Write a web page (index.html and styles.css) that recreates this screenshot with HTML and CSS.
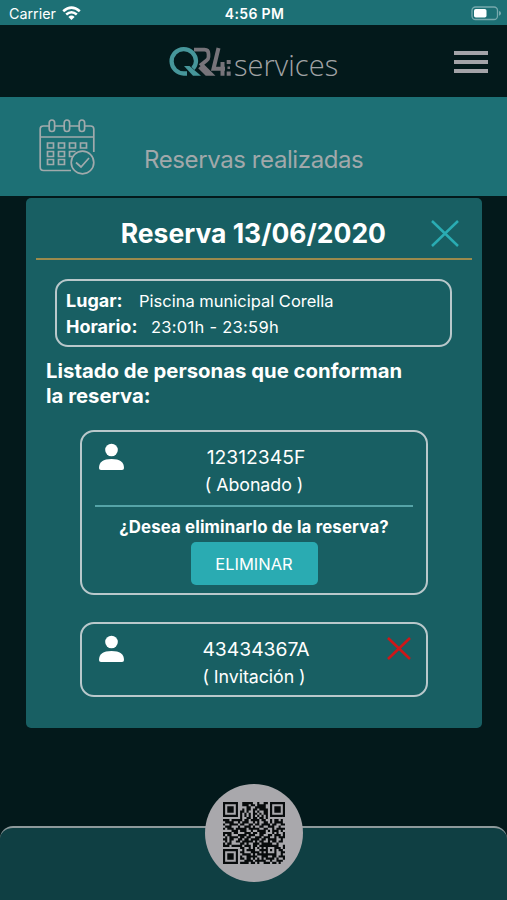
FILE: index.html
```html
<!DOCTYPE html>
<html lang="es">
<head>
<meta charset="utf-8">
<title>Reservas realizadas</title>
<link rel="stylesheet" href="styles.css">
</head>
<body>
<div class="app">
  <div class="status">
    <div class="carrier"><span>Carrier</span>
      <svg width="19" height="15" viewBox="0 0 19 15" fill="none" stroke="#fff" stroke-width="2.6"><path d="M1.2 5.2Q9.500-2 17.800 5.200M4.200 8.500Q9.500 4 14.800 8.500"/><path d="M6.400 10.900Q9.500 8.200 12.600 10.900L9.500 14Z" fill="#fff" stroke="none"/></svg>
    </div>
    <strong class="clock">4:56 PM</strong>
    <svg class="battery" width="31" height="15" viewBox="0 0 31 15"><rect x="1" y="1" width="25.500" height="12.500" rx="3.500" fill="none" stroke="#77a9ad" stroke-width="1.300"/><rect x="3" y="3" width="12.500" height="8.500" rx="1.800" fill="#fff"/><path d="M28 5Q30 5.500 30 7.300T28 9.800Z" fill="#77a9ad"/></svg>
  </div>
  <header class="header">
    <div class="logo">
      <svg width="62" height="34" viewBox="0 0 62 34" fill="none">
        <path d="M25 5.700H35.500Q39.500 5.700 39.500 10V13Q39.500 15 37.500 16.500L32.500 20.500L42 30H37.500L30.500 23" stroke="#77747a" stroke-width="3.700"/>
        <path d="M49.500 4L44.500 24.800H56M53.500 18V31.700" stroke="#77747a" stroke-width="4"/>
        <path d="M18 29.500H15A12.200 12.200 0 1 1 27 17Q27 21 24 24.500" stroke="#46969a" stroke-width="4.300"/>
        <path d="M15 22H20.500L32 31.700H24Z" fill="#46969a"/>
        <path d="M57.700 16H61.700V20H57.700ZM57.700 27.500H61.700V31.700H57.700ZM58.500 22.500H61V25H58.500Z" fill="#77747a"/>
      </svg>
      <span class="brand">services</span>
    </div>
    <div class="menu"><i></i><i></i><i></i></div>
  </header>
  <section class="banner">
    <svg width="58" height="58" viewBox="0 0 58 58" fill="none" stroke="#a1aaac" stroke-width="1.700">
      <path d="M10 8H4.500Q1.200 8 1.200 11V49Q1.200 52.500 4.500 52.500H32M16 8H25M31 8H40M46 8H51.500Q54.800 8 54.800 11V34M1.200 19H54.800"/>
      <rect x="10.200" y="2" width="5.400" height="11.500" rx="2.700"/><rect x="25.200" y="2" width="5.400" height="11.500" rx="2.700"/><rect x="40.200" y="2" width="5.400" height="11.500" rx="2.700"/>
      <path d="M8.500 25H14.500V30H8.500ZM19.500 25H25.500V30H19.500ZM30.500 25H36.500V30H30.500ZM41.500 25H47.500V30H41.500ZM8.500 33.500H14.500V38.500H8.500ZM19.500 33.500H25.500V38.500H19.500ZM33 38.500H30.500V33.500H36.500M8.500 41.500H14.500V46.500H8.500ZM19.500 41.500H25.500V46.500H19.500Z"/>
      <circle cx="43.500" cy="44.500" r="11.300"/><path d="M37 44.500L42 49L50 40"/>
    </svg>
    <h1>Reservas realizadas</h1>
  </section>
  <main class="modal">
    <div class="modal-head">
      <h2>Reserva 13/06/2020</h2>
      <svg class="close" width="28" height="27" viewBox="0 0 28 27"><path d="M1 1L27 26M27 1L1 26" stroke="#2aacb3" stroke-width="2.500"/></svg>
    </div>
    <div class="details">
      <p><b class="place">Lugar:</b><span class="place-value">Piscina municipal Corella</span></p>
      <p><b class="hours">Horario:</b><span class="hours-value">23:01h - 23:59h</span></p>
    </div>
    <h3><span class="line-one">Listado de personas que conforman</span><br><span class="line-two">la reserva:</span></h3>
    <article class="person">
      <div class="person-row">
        <svg width="26" height="28" viewBox="0 0 26 28" fill="#fff"><circle cx="12.500" cy="7" r="6.300"/><path d="M0 25Q0 16 12.500 16T25 25Q25 27 23 27H2Q0 27 0 25Z"/></svg>
        <div class="identity"><p class="id-one">12312345F</p><p class="type-one">( Abonado )</p></div>
        <span></span>
      </div>
      <div class="confirm"><strong>¿Desea eliminarlo de la reserva?</strong><button><span>ELIMINAR</span></button></div>
    </article>
    <article class="person guest">
      <div class="person-row">
        <svg width="26" height="28" viewBox="0 0 26 28" fill="#fff"><circle cx="12.500" cy="7" r="6.300"/><path d="M0 25Q0 16 12.500 16T25 25Q25 27 23 27H2Q0 27 0 25Z"/></svg>
        <div class="identity"><p class="id-two">43434367A</p><p class="type-two">( Invitación )</p></div>
        <svg class="remove" width="24" height="24" viewBox="0 0 24 24"><path d="M1 1L23 22M23 1L1 22" stroke="#cd1719" stroke-width="2.600"/></svg>
      </div>
    </article>
  </main>
  <footer class="footer"><div class="qr"><svg id="code" width="62" height="62" viewBox="0 0 29 29"></svg></div></footer>
</div>
<script src="qr.js"></script>
</body>
</html>
```
FILE: styles.css
```css
* { box-sizing: border-box; }
body { margin: 0; background: #03191b; color: #fff; font-family: Inter, "Liberation Sans", sans-serif; }
p, h1, h2, h3 { margin: 0; }
svg { display: block; flex: none; }
.app { width: 507px; height: 900px; display: flex; flex-direction: column; overflow: hidden; }
.status { height: 25px; flex: none; display: grid; grid-template-columns: 1fr auto 1fr; align-items: center; background: #1d7075; padding: 2px 7px 0 9px; }
.carrier { display: flex; align-items: center; gap: 6px; font-size: 14.3px; line-height: 20px; }
.clock { font-size: 14px; font-weight: 600; line-height: 20px; letter-spacing: .35px; }
.battery { justify-self: end; margin-right: -2px; }
.header { height: 72px; flex: none; display: flex; align-items: center; justify-content: space-between; padding: 0 19px 0 169px; }
.logo { display: flex; align-items: flex-start; height: 34px; }
.brand { font-family: "Open Sans", "Noto Sans", sans-serif; font-weight: 300; font-size: 29px; line-height: 42px; color: #a1a3a5; margin-left: 3px; letter-spacing: .05px; }
.menu { width: 34px; display: grid; gap: 5px; padding-top: 2px; }
.menu i { height: 4px; background: #a3a3a8; }
.banner { height: 99px; flex: none; display: flex; background: #1d7075; padding: 21px 0 0 39px; }
.banner h1 { margin: 27px 0 0 47px; font-size: 24px; line-height: 30px; font-weight: 400; letter-spacing: -.4px; color: #a1a8aa; white-space: nowrap; }
.modal { height: 530px; flex: none; margin: 2px 25px 0 26px; padding: 0 10px; border-radius: 5px; background: #185f63; }
.modal-head { height: 62px; border-bottom: 2px solid #9b8a4c; display: flex; justify-content: flex-end; align-items: flex-start; padding-right: 13px; }
h2 { font-size: 26.5px; line-height: 34px; font-weight: 700; margin: 18px 45px 0 0; white-space: nowrap; }
.close { margin-top: 22px; }
.details { height: 68px; margin: 19px 20px 0 19px; border: 2px solid #b9c8cb; border-radius: 13px; padding: 7px 9px; }
.details p { display: flex; height: 26px; line-height: 26px; font-size: 16.5px; white-space: nowrap; }
.details b { font-size: 18px; font-weight: 700; }
.hours-value { letter-spacing: .28px; }
.place { width: 73px; }
.hours { width: 85px; }
h3 { margin: 11px 0 0 10px; font-size: 20.3px; line-height: 25px; font-weight: 700; letter-spacing: .02px; white-space: nowrap; }
.person { height: 165px; margin: 22px 44px 0; border: 2px solid #b9c8cb; border-radius: 14px; padding: 11px 13px 0; }
.guest { height: 75px; margin-top: 27px; }
.person-row { display: grid; grid-template-columns: 30px 1fr 30px; height: 62px; padding-left: 4px; }
.identity { text-align: center; font-size: 19.3px; line-height: 28px; white-space: nowrap; }
.identity p + p { font-size: 17.8px; letter-spacing: -.05px; margin-left: -4px; }
.remove { margin: 2px 2px 0 0; justify-self: end; }
.confirm { border-top: 2px solid #55a4a8; display: flex; flex-direction: column; align-items: center; }
.confirm strong { margin-top: 8px; font-size: 16.8px; line-height: 24px; font-weight: 700; letter-spacing: .16px; white-space: nowrap; }
button { margin: 3px 0 0; width: 127px; height: 43px; border: 0; border-radius: 5px; background: #2aabb2; color: #fff; font: 400 16.5px/24px Inter, sans-serif; padding: 0; }
.footer { height: 74px; flex: none; margin-top: auto; border-top: 2px solid #8d999b; border-radius: 13px 13px 0 0; background: #0f3f43; display: flex; justify-content: center; }
.qr { margin-top: -44px; width: 98px; height: 98px; border-radius: 50%; background: #a9a8ac; display: flex; align-items: center; justify-content: center; }
```
FILE: qr.js
```js
const rows = [
"11111110011111001001101111111",
"10000010011101101111001000001",
"10111010000110011111001011101",
"10111010010110110111101011101",
"10111010110100101001101011101",
"10000010101010110101101000001",
"11111110101010101010101111111",
"00000000100110110110100000000",
"11101111101101111011001011010",
"01111001011100101001101011110",
"10011110110011011011110110011",
"01110001001110100110011100100",
"10111011111011111001100101111",
"00001110111001001111010111010",
"11110110001110110111000101001",
"10110001111011100110011011101",
"01011110110110011101110010111",
"11011001101101111011011110010",
"01010011011111010110010110110",
"10110000110100111011111001000",
"11101111101110110111111111001",
"00000000110010101010100011101",
"11111110010111100111101010110",
"10000010110001111010100010011",
"10111010011110101111111110010",
"10111010100111110011100110111",
"10111010110110101010111101001",
"10000010001111011111001001110",
"11111110111101101001110110100"
];
const path = document.createElementNS("http://www.w3.org/2000/svg", "path");
path.setAttribute("d", rows.map((row, y) => [...row].map((c, x) => c === "1" ? `M${x} ${y}h1v1h-1z` : "").join("")).join(""));
path.setAttribute("fill", "#080b0c");
document.getElementById("code").append(path);
```
